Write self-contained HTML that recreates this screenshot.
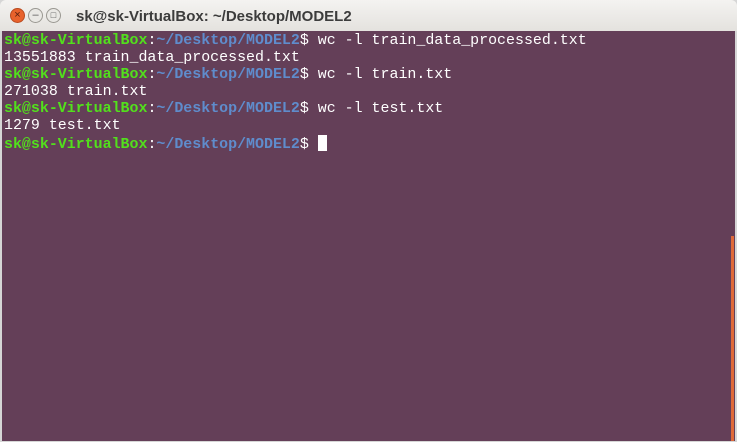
<!DOCTYPE html>
<html><head><style>
body{margin:0;width:737px;height:442px;overflow:hidden;background:#d6d6d6;font-family:"Liberation Sans",sans-serif}
.tb{position:absolute;left:0;top:0;width:737px;height:31px;background:linear-gradient(#f4f3f1,#e4e2de);border-radius:6px 6px 0 0}
.title{position:absolute;left:76px;top:8px;font-size:15px;font-weight:bold;color:#3c3c3c}
.btn{position:absolute;top:8px;width:15px;height:15px;border-radius:50%;box-sizing:border-box;font-size:11px;line-height:13px;text-align:center}
.term{position:absolute;left:2px;top:31px;width:733px;height:410px;background:#643f58}
pre{margin:0;position:absolute;left:2px;top:2px;font-family:"Liberation Mono",monospace;font-size:14.95px;line-height:17px;color:#fff}
.g{color:#52e01c;font-weight:bold}.b{color:#5f8ccc;font-weight:bold}
.cur{display:inline-block;width:9px;height:16px;background:#fff;vertical-align:-3px}
.sb{position:absolute;left:731px;top:236px;width:3px;height:205px;background:#e06a3a}
</style></head><body>
<div class="tb">
<div class="btn" style="left:10px;background:#e8622c;border:1px solid #b94a1f;color:#5a2010">×</div>
<div class="btn" style="left:28px;background:#e9e8e4;border:1px solid #9a9892;color:#555">–</div>
<div class="btn" style="left:46px;background:#e9e8e4;border:1px solid #9a9892;color:#555;font-size:9px">□</div>
<div class="title">sk@sk-VirtualBox: ~/Desktop/MODEL2</div>
</div>
<div class="term">
<pre><span class="g">sk@sk-VirtualBox</span>:<span class="b">~/Desktop/MODEL2</span>$ wc -l train_data_processed.txt
13551883 train_data_processed.txt
<span class="g">sk@sk-VirtualBox</span>:<span class="b">~/Desktop/MODEL2</span>$ wc -l train.txt
271038 train.txt
<span class="g">sk@sk-VirtualBox</span>:<span class="b">~/Desktop/MODEL2</span>$ wc -l test.txt
1279 test.txt
<span class="g">sk@sk-VirtualBox</span>:<span class="b">~/Desktop/MODEL2</span>$ <span class="cur"></span></pre>
</div>
<div class="sb"></div>
</body></html>
